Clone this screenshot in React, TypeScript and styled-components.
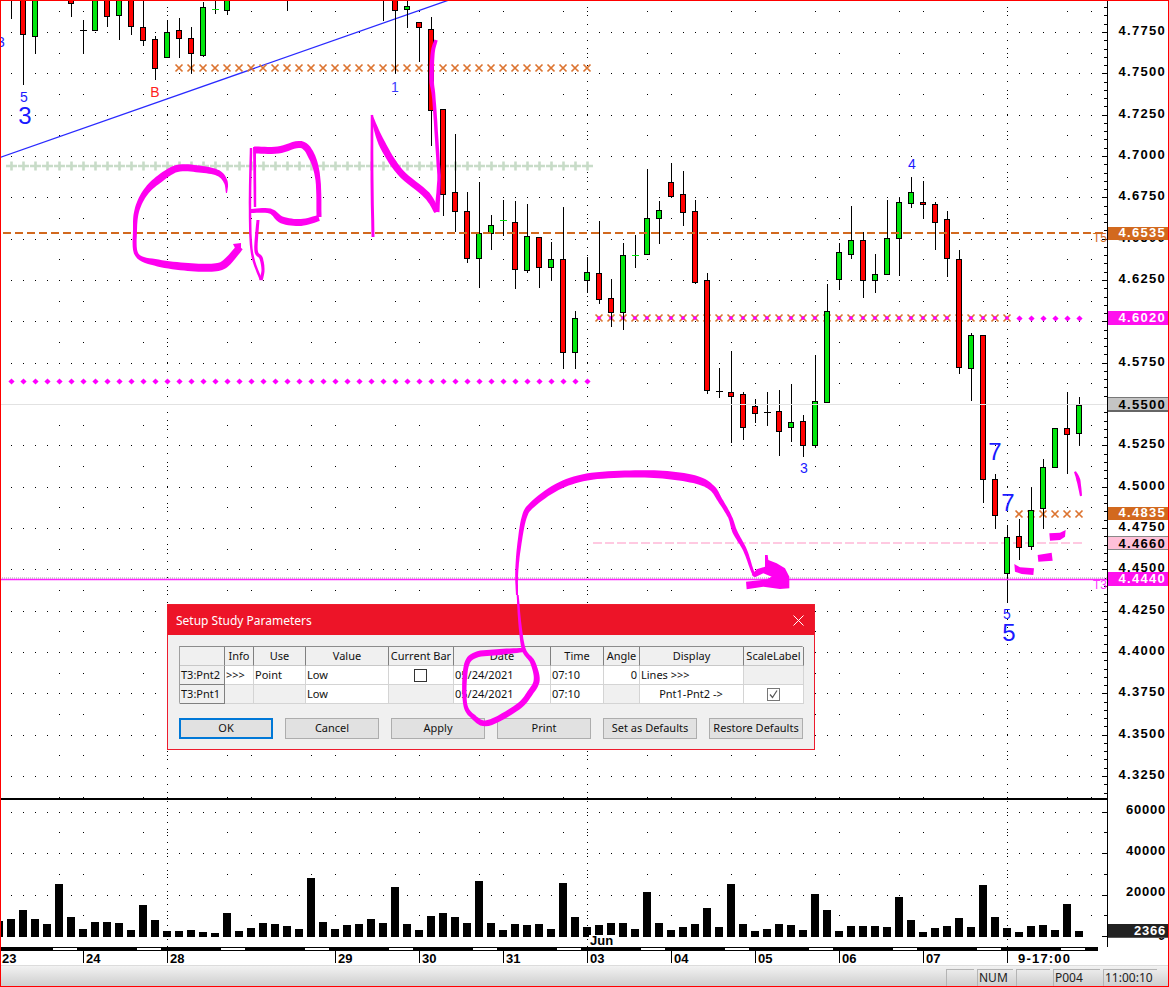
import React from "react";
import styled, { createGlobalStyle } from "styled-components";

const Global = createGlobalStyle`
  html, body { margin: 0; padding: 0; background: #fff; }
  #root { width: 1169px; height: 987px; }
`;

const Window = styled.div`
  box-sizing: border-box; width: 1169px; height: 987px; border: 1px solid #ff0000;
  display: flex; flex-direction: column; position: relative; overflow: hidden;
  background: #fff; font-family: "Liberation Sans", Arial, sans-serif;
`;
const ChartRow = styled.div` display: flex; height: 946px; flex: none; `;
const PlotColumn = styled.div`
  width: 1106px; flex: none; border-right: 1px solid #000; display: flex; flex-direction: column; position: relative;
`;
const PaneSvg = styled.svg` display: block; flex: none; `;
const PaneDivider = styled.div` height: 2px; background: #000; flex: none; `;
const ScaleColumn = styled.div` width: 60px; flex: none; position: relative; overflow: hidden; `;
const ScaleLabel = styled.div<{ $y: number }>`
  position: absolute; right: 2px; top: ${(p) => p.$y - 8}px; height: 14px; line-height: 14px;
  font-size: 13px; font-weight: 700; color: #000; letter-spacing: 1.3px; white-space: nowrap;
`;
const VolumeLabel = styled(ScaleLabel)` letter-spacing: 0.75px; `;
const tagColors: Record<string, string> = {
  orange: "background:#d2691e;color:#fff;",
  magenta: "background:#ff10ee;color:#fff;",
  gray: "background:#c4c4c4;color:#000;border-top:1px solid #777;border-bottom:2px solid #666;",
  pink: "background:#ffc0d8;color:#000;border-top:1px solid #888;border-bottom:1px solid #888;",
  dark: "background:#222;color:#fff;letter-spacing:0.75px;border-bottom:1px solid #555;",
};
const PriceTag = styled.div<{ $top: number; $h: number; $kind: string }>`
  position: absolute; left: 0; right: 0; top: ${(p) => p.$top}px; height: ${(p) => p.$h}px;
  box-sizing: border-box; padding-right: 2px; text-align: right; font-size: 13px; font-weight: 700;
  line-height: ${(p) => p.$h - 1}px; letter-spacing: 1.3px; ${(p) => tagColors[p.$kind]}
`;
const MonthBadge = styled.div`
  position: absolute; left: 588px; bottom: 0; width: 26px; height: 12px; background: #fff;
  font-size: 13px; font-weight: 700; line-height: 12px; padding-left: 1px;
`;
const TimeBar = styled.div`
  margin-right: 70px; height: 4px; flex: none; box-sizing: border-box; background-color: #000;
  border-top: 1px solid #000; border-bottom: 1px solid #000;
  background-image: repeating-linear-gradient(90deg, #000 0, #000 52px, #fff 52px, #fff 76px, #000 76px, #000 84px);
`;
const DateRow = styled.div`
  display: grid; height: 14px; flex: none;
  grid-template-columns: 82px 84px 168px 84px 84px 84px 84px 84px 84px 84px 84px 1fr;
`;
const DateCell = styled.div<{ $first?: boolean }>`
  border-left: ${(p) => (p.$first ? "none" : "1px solid #000")}; padding-left: ${(p) => (p.$first ? "1px" : "2px")};
  font-size: 13px; font-weight: 700; line-height: 15px; height: 12px; color: #000; white-space: nowrap;
`;
const ClockCell = styled(DateCell)` padding-left: 10px; letter-spacing: 1.2px; height: 12px; `;
const StatusBar = styled.div`
  height: 21px; flex: none; box-sizing: border-box; border-top: 1px solid #dcdcdc; padding: 3px 11px 0 0;
  background: linear-gradient(#f2f2f2, #cecece); display: flex; justify-content: flex-end; gap: 3px;
`;
const StatusPanel = styled.div<{ $w: number }>`
  width: ${(p) => p.$w}px; height: 17px; box-sizing: border-box; border-left: 1px solid #b4b4b4; border-top: 1px solid #b4b4b4;
  font: 12px/16px "Noto Sans", sans-serif; color: #222; padding-left: 1px; overflow: hidden;
`;

const Dialog = styled.div`
  position: absolute; left: 166px; top: 603px; width: 648px; height: 146px; box-sizing: border-box;
  border: 1px solid #ed1c2e; background: #f0f0f0; display: flex; flex-direction: column;
  font-family: "Noto Sans", sans-serif;
`;
const TitleBar = styled.div`
  height: 30px; flex: none; background: #ed1428; color: #fff; font-size: 12px; line-height: 31px; padding: 0 10px 0 8px;
  display: flex; align-items: center; justify-content: space-between;
`;
const DialogBody = styled.div` padding: 11px 11px 0 11px; display: flex; flex-direction: column; gap: 14px; `;
const ParamGrid = styled.div`
  display: grid; width: 624px; grid-template-columns: 45px 29px 52px 83px 65px 97px 53px 36px 104px 60px;
  grid-auto-rows: 19px; border-top: 1px solid #8c8c8c; border-left: 1px solid #a0a0a0; border-right: 1px solid #d4d4d4;
  border-bottom: 2px solid #d4d4d4; box-sizing: border-box; height: 58px; background: #fff;
`;
const HeadCell = styled.div`
  background: #f0f0f0; border-right: 1px solid #808080; border-bottom: 1px solid #c8c8c8; box-sizing: border-box;
  font-size: 11px; line-height: 18px; text-align: center; color: #111; white-space: nowrap; overflow: hidden;
`;
const RowLabel = styled(HeadCell)`
  text-align: left; padding-left: 1px; border-bottom: 1px solid #808080;
`;
const Cell = styled.div<{ $shade?: boolean; $align?: string }>`
  background: ${(p) => (p.$shade ? "#f0f0f0" : "#fff")}; border-right: 1px solid #d4d4d4; border-bottom: 1px solid #d4d4d4;
  box-sizing: border-box; font-size: 11px; line-height: 18px; padding: 0 2px 0 1px; color: #111; white-space: nowrap; overflow: hidden;
  text-align: ${(p) => p.$align || "left"}; display: block;
`;
const CheckCell = styled(Cell)` display: flex; align-items: center; justify-content: center; `;
const CheckBox = styled.span<{ $on?: boolean }>`
  width: 13px; height: 13px; box-sizing: border-box; border: 1px solid ${(p) => (p.$on ? "#777" : "#333")};
  background: #fff; display: flex; align-items: center; justify-content: center;
`;
const ButtonRow = styled.div` display: flex; gap: 12px; `;
const DialogButton = styled.button<{ $primary?: boolean }>`
  width: 94px; height: 21px; padding: 0 0 2px; box-sizing: border-box; background: #e1e1e1; color: #111;
  border: ${(p) => (p.$primary ? "2px solid #0078d7" : "1px solid #adadad")};
  font: 11px "Noto Sans", sans-serif; white-space: nowrap;
`;
const Overlay = styled.svg` position: absolute; left: 0; top: 0; pointer-events: none; `;

type C = [number, number, number, number, number, string];
const R = "#ff0000", G = "#00e40c";
const candles: C[] = [
  [11, -5, -9, -9, 19, "w"], [23, -5, -5, 34, 85, R], [35, -5, -5, 36, 54, G], [71, -5, -5, 3, 17, R],
  [83, 20, 30, 30, 54, "k"], [95, -5, -5, 30, 30, G], [107, -5, -5, 16, 27, R], [119, -5, -5, 15, 40, G],
  [131, -5, -5, 26, 35, R], [143, -5, 27, 40, 46, R], [155, 36, 39, 68, 80, R], [167, 20, 32, 57, 57, G],
  [179, 18, 30, 38, 58, R], [191, 27, 38, 53, 74, R], [203, 2, 7, 55, 57, G], [215, -5, 9, 9, 14, "g"],
  [227, -5, -5, 10, 15, G], [287, -5, -9, -9, 11, "w"], [383, -5, -9, -9, 21, "w"], [395, -5, -5, 10, 73, R],
  [407, -5, 6, 9, 28, G], [419, 22, 22, 27, 62, R], [431, 17, 29, 110, 146, R], [443, 109, 109, 194, 216, R],
  [455, 134, 192, 211, 232, R], [467, 192, 211, 258, 263, R], [479, 182, 233, 258, 288, G], [491, 215, 225, 233, 250, G],
  [503, 200, 220, 220, 236, "g"], [515, 201, 222, 269, 289, R], [527, 204, 236, 270, 273, G], [539, 237, 237, 267, 288, R],
  [551, 242, 259, 267, 281, G], [563, 207, 259, 352, 369, R], [575, 311, 318, 352, 369, G], [587, 257, 272, 280, 293, G],
  [599, 221, 273, 299, 304, R], [611, 279, 298, 312, 327, R], [623, 243, 255, 312, 330, G], [635, 235, 255, 255, 268, "g"],
  [647, 169, 218, 254, 255, G], [659, 201, 210, 218, 244, G], [671, 163, 182, 196, 198, R], [683, 171, 194, 212, 226, R],
  [695, 200, 211, 282, 284, R], [707, 273, 280, 390, 394, R], [719, 368, 391, 391, 398, "k"], [731, 351, 392, 396, 443, R],
  [743, 392, 394, 427, 440, R], [755, 399, 406, 413, 423, R], [767, 392, 412, 412, 426, "k"], [779, 390, 411, 431, 456, R],
  [791, 384, 422, 427, 442, G], [803, 415, 421, 445, 457, R], [815, 355, 401, 445, 448, G], [827, 284, 311, 402, 403, G],
  [839, 243, 252, 279, 290, G], [851, 206, 240, 254, 259, G], [863, 232, 240, 280, 298, R], [875, 254, 274, 280, 293, G],
  [887, 200, 238, 274, 274, G], [899, 197, 202, 238, 276, G], [911, 177, 192, 203, 208, G], [923, 181, 202, 204, 218, R],
  [935, 202, 204, 222, 250, R], [947, 211, 219, 258, 277, R], [959, 250, 259, 367, 374, R], [971, 333, 335, 368, 401, G],
  [983, 335, 335, 479, 503, R], [995, 474, 479, 515, 528, R], [1007, 525, 537, 573, 603, G], [1019, 519, 536, 547, 560, R],
  [1031, 487, 510, 546, 550, G], [1043, 459, 467, 508, 529, G], [1055, 428, 428, 467, 468, G], [1067, 392, 428, 434, 474, R],
  [1079, 397, 405, 433, 445, G],
];
const volumes: [number, number][] = [
  [-1, 393], [11, 387], [23, 360], [35, 387], [47, 402], [59, 282], [71, 381], [83, 417], [95, 396], [107, 396], [119, 399], [131, 420],
  [143, 345], [155, 390], [167, 423], [179, 423], [191, 420], [203, 426], [215, 429], [227, 369], [239, 423], [251, 414], [263, 399],
  [275, 402], [287, 408], [299, 417], [311, 264], [323, 396], [335, 417], [347, 405], [359, 402], [371, 387], [383, 399], [395, 291],
  [407, 402], [419, 420], [431, 378], [443, 369], [455, 381], [467, 399], [479, 273], [491, 399], [503, 420], [515, 402], [527, 405],
  [539, 402], [551, 417], [563, 279], [575, 381], [587, 411], [599, 405], [611, 399], [623, 399], [635, 417], [647, 306], [659, 399],
  [671, 420], [683, 411], [695, 402], [707, 354], [719, 411], [731, 282], [743, 402], [755, 423], [767, 417], [779, 402], [791, 405],
  [803, 420], [815, 312], [827, 360], [839, 423], [851, 408], [863, 408], [875, 408], [887, 411], [899, 321], [911, 390], [923, 426],
  [935, 414], [947, 408], [959, 384], [971, 411], [983, 285], [995, 381], [1007, 414], [1019, 426], [1031, 408], [1043, 405], [1055, 420],
  [1067, 342], [1079, 423],
];

const range = (a: number, b: number, s = 1) => { const o: number[] = []; for (let v = a; s > 0 ? v <= b : v >= b; v += s) o.push(v); return o; };
const dot = (x: number, y: number) => `M${x} ${y}h1v1h-1z`;
const slots = range(11, 1091, 12);
const pairSlots = range(59, 1091, 84).flatMap((x) => [x, x + 24]);

const priceGrid = () => {
  let d = "";
  range(0, 18).forEach((k) => { const y = Math.round(32 + 41.33 * k); slots.forEach((x) => (d += dot(x, y))); });
  range(-1, 18).forEach((k) => { const y = Math.round(52.7 + 41.33 * k); pairSlots.forEach((x) => (d += dot(x, y))); });
  [167, 587, 1007].forEach((x) => range(0, 96).forEach((i) => (d += dot(x, Math.round(7 + 8.267 * i)))));
  return d;
};
const volumeGrid = () => {
  let d = "";
  [812, 853, 895].forEach((y) => slots.forEach((x) => (d += dot(x, y))));
  [832, 874, 915].forEach((y) => pairSlots.forEach((x) => (d += dot(x, y))));
  [167, 587, 1007].forEach((x) => range(801, 946, 6.9).forEach((y) => (d += dot(x, Math.round(y)))));
  return d;
};
const priceTicks = () => {
  let d = "";
  range(-3, 93).forEach((i) => { const y = Math.round(32 + 8.267 * i); const major = ((i % 5) + 5) % 5 === 0; d += `M${major ? 1102 : 1104} ${y + 0.5}H1107`; });
  return d;
};
const volumeTicks = () => {
  let d = "";
  [812, 832, 853, 874, 895, 915, 936].forEach((y, i) => (d += `M${i % 2 ? 1104 : 1102} ${y + 0.5}H1107`));
  return d;
};

type P = [number, number, number];
const ribbon = (pts: P[]) => {
  const s: P[] = [];
  for (let i = 0; i < pts.length - 1; i++) {
    const p0 = pts[Math.max(i - 1, 0)], p1 = pts[i], p2 = pts[i + 1], p3 = pts[Math.min(i + 2, pts.length - 1)];
    for (let j = 0; j < 8; j++) {
      const t = j / 8, t2 = t * t, t3 = t2 * t;
      const f = (a: number, b: number, c: number, e: number) => 0.5 * (2 * b + (c - a) * t + (2 * a - 5 * b + 4 * c - e) * t2 + (3 * b - a - 3 * c + e) * t3);
      s.push([f(p0[0], p1[0], p2[0], p3[0]), f(p0[1], p1[1], p2[1], p3[1]), p1[2] + (p2[2] - p1[2]) * t]);
    }
  }
  s.push(pts[pts.length - 1]);
  const L: string[] = [], Rr: string[] = [];
  s.forEach((p, i) => {
    const a = s[Math.max(i - 1, 0)], b = s[Math.min(i + 1, s.length - 1)];
    const dx = b[0] - a[0], dy = b[1] - a[1], n = Math.hypot(dx, dy) || 1;
    const nx = (-dy / n) * p[2] * 0.5, ny = (dx / n) * p[2] * 0.5;
    L.push(`${(p[0] + nx).toFixed(1)} ${(p[1] + ny).toFixed(1)}`);
    Rr.unshift(`${(p[0] - nx).toFixed(1)} ${(p[1] - ny).toFixed(1)}`);
  });
  return `M${L.join("L")}L${Rr.join("L")}Z`;
};
const poly = (pts: number[][]) => `M${pts.map((p) => p.join(" ")).join("L")}Z`;
const z10 = (a: number[][]) => a.map(([x, y]) => [500 + x / 3, 460 + y / 3]);
const z6 = (a: number[][]) => a.map(([x, y]) => [900 + x / 3, 390 + y / 3]);

const strokes: string[] = [
  ribbon([[226.5, 193, 1], [225.7, 182, 4], [218, 173, 6], [199, 169, 7], [177, 168.5, 7], [158, 180, 7.5], [145, 193, 6], [137, 210, 5], [135, 230, 4], [137, 255, 4], [158, 263, 7], [188, 267, 8], [214, 267.5, 8], [226, 263, 8], [240, 247, 7]]),
  poly([[233, 244], [241, 243], [241, 250], [236, 250]]),
  ribbon([[251, 148, 2.5], [250, 210, 2.5], [252, 253, 2.5], [261, 280, 2.5]]),
  ribbon([[254.5, 147, 3], [255, 207, 2.5]]),
  ribbon([[254, 150, 7], [278, 150, 7], [301, 144.5, 7], [312, 157, 7], [318, 180, 5], [319, 217, 5]]),
  ribbon([[319, 218, 6], [301, 222.5, 7], [282, 220, 7], [270, 211, 5], [250, 211, 4]]),
  ribbon([[258, 220, 3], [256, 250, 3.5], [261, 258, 3.5], [263, 270, 3], [261, 280, 3.5]]),
  ribbon([[373, 237, 3], [372, 180, 3], [372, 115, 2.5]]),
  ribbon([[371.5, 115, 1.5], [381.7, 143, 7], [400, 172, 7], [426.7, 195, 7], [436.7, 212, 5]]),
  ribbon([[437, 212, 5], [439, 180, 3.5], [438, 160, 3.5], [434, 100, 3.5], [431.7, 80, 4.5], [432.7, 53, 4], [436, 40, 3.5]]),
  ribbon([[517, 595, 2], [516.7, 573, 3], [519, 547, 4], [524, 518, 5], [532, 505, 6], [557, 487, 7], [587, 477, 7], [630, 474, 7], [667, 475, 8], [697, 480, 8], [712, 488, 6], [720, 500, 5], [730, 517, 4], [735, 532, 5], [745, 550, 4], [752, 570, 3], [755, 576, 3]]),
  poly(z10([[795, 285], [803, 285], [805, 300], [830, 310], [855, 325], [868, 350], [868, 385], [840, 387], [790, 380], [740, 388], [738, 365], [800, 358], [815, 350], [790, 340], [765, 352], [755, 345], [770, 328], [795, 320]])),
  ribbon([[517.7, 595, 2], [520, 625, 3], [524, 650, 4], [532.5, 662, 5], [536.7, 680, 6], [530, 693, 6], [517.7, 707, 6], [488, 723, 6], [473.5, 717, 5], [465, 703, 4], [466, 667, 5], [475.7, 655, 6], [500, 652, 6], [524, 650, 4]]),
  poly(z6([[343, 522], [360, 532], [402, 535], [400, 555], [365, 552], [345, 545]])),
  poly(z6([[413, 495], [455, 488], [458, 512], [415, 515]])),
  poly(z6([[448, 430], [480, 428], [497, 420], [495, 440], [480, 450], [450, 452]])),
  ribbon([[900 + 525 / 3, 390 + 245 / 3, 2], [900 + 535 / 3, 390 + 270 / 3, 4], [900 + 543 / 3, 390 + 318 / 3, 2]]),
];

const XMark = ({ x, y }: { x: number; y: number }) => (
  <path d={`M${x - 3.5} ${y - 3.5}L${x + 3.5} ${y + 3.5}M${x + 3.5} ${y - 3.5}L${x - 3.5} ${y + 3.5}`} stroke="#dc7430" strokeWidth={1.7} fill="none" />
);
const Dot = ({ x, y, r = 3.1 }: { x: number; y: number; r?: number }) => (
  <path d={`M${x} ${y - r}L${x + r} ${y}L${x} ${y + r}L${x - r} ${y}Z`} fill="#ff00ff" />
);
const Cross = ({ x, y }: { x: number; y: number }) => (
  <path d={`M${x - 5} ${y}h11M${x + 0.5} ${y - 4.5}v9`} stroke="#c8dcc8" strokeWidth={2.6} fill="none" />
);
const Label = ({ x, y, size, fill = "#1a1aff", children }: { x: number; y: number; size: number; fill?: string; children: React.ReactNode }) => (
  <text x={x} y={y} fontSize={size} fill={fill} textAnchor="middle" fontFamily="Liberation Sans, Arial, sans-serif">{children}</text>
);

const PricePane = () => (
  <PaneSvg width={1106} height={797} viewBox="1 1 1106 797">
    <path d={priceGrid()} fill="#000" />
    <path d={priceTicks()} stroke="#000" strokeWidth={1} fill="none" />
    <path d="M0 157.5L449 0" stroke="#2a2aff" strokeWidth={1.3} fill="none" />
    {range(11, 587, 12).map((x) => <Cross key={x} x={x} y={166} />)}
    {range(179, 587, 12).map((x) => <XMark key={x} x={x} y={68} />)}
    {range(599, 1007, 12).map((x) => <XMark key={x} x={x} y={318} />)}
    {range(1019, 1079, 12).map((x) => <XMark key={x} x={x} y={514} />)}
    {range(11, 587, 12).map((x) => <Dot key={x} x={x + 0.5} y={381.5} />)}
    {range(599, 1007, 12).map((x) => <Dot key={x} x={x} y={318} r={2.3} />)}
    {range(1019, 1079, 12).map((x) => <Dot key={x} x={x + 0.5} y={318.5} />)}
    <line x1={593} x2={1084} y1={543} y2={543} stroke="#ffb8d8" strokeWidth={1.5} strokeDasharray="9 3" />
    {candles.map(([c, hi, top, bot, lo, col]) => (
      <g key={c}>
        <rect x={c} y={hi} width={1} height={lo - hi} fill="#000" />
        {col === "k" && <rect x={c - 3} y={top} width={7} height={1} fill="#000" />}
        {col === "g" && <rect x={c - 3} y={top} width={7} height={1} fill="#00e40c" />}
        {(col === R || col === G) && <rect x={c - 2.5} y={top + 0.5} width={5} height={bot - top} fill={col} stroke="#000" strokeWidth={1} />}
      </g>
    ))}
    <line x1={0} x2={1107} y1={404.5} y2={404.5} stroke="#e2e2e2" strokeWidth={1} />
    <line x1={3} x2={1107} y1={233} y2={233} stroke="#d2691e" strokeWidth={2} strokeDasharray="8 4" />
    <line x1={0} x2={1107} y1={578} y2={578} stroke="#d0d0d0" strokeWidth={2} strokeDasharray="1 1" />
    <line x1={0} x2={1107} y1={579.5} y2={579.5} stroke="#ff20ff" strokeWidth={1.4} />
    <Label x={24} y={102} size={14}>5</Label>
    <Label x={25} y={124} size={24}>3</Label>
    <Label x={1} y={47} size={14}>3</Label>
    <Label x={155} y={97} size={14} fill="#ff2020">B</Label>
    <Label x={395} y={92} size={14} fill="#3a3aff">1</Label>
    <Label x={912} y={169} size={14}>4</Label>
    <Label x={804} y={473} size={14}>3</Label>
    <Label x={995} y={460} size={24}>7</Label>
    <Label x={1008} y={511} size={24}>7</Label>
    <Label x={1007} y={619} size={14}>5</Label>
    <Label x={1009} y={641} size={24}>5</Label>
    <Label x={1100} y={242} size={12} fill="#d2691e">T5</Label>
    <Label x={1100} y={589} size={12} fill="#ff30ff">T3</Label>
  </PaneSvg>
);

const VolumePane = () => (
  <PaneSvg width={1106} height={147} viewBox="1 800 1106 147">
    <path d={volumeGrid()} fill="#000" />
    <path d={volumeTicks()} stroke="#000" strokeWidth={1} fill="none" />
    {volumes.map(([x, top]) => <rect key={x} x={x - 4} y={790 + top / 3} width={8} height={937 - (790 + top / 3)} fill="#000" />)}
  </PaneSvg>
);

const prices = range(0, 18).map((k) => ({ y: 31 + 41.33 * k, text: (4.775 - 0.025 * k).toFixed(4) }));
const dates = ["23", "24", "28", "29", "30", "31", "03", "04", "05", "06", "07"];

const App = () => (
  <>
    <Global />
    <Window>
      <ChartRow>
        <PlotColumn>
          <PricePane />
          <PaneDivider />
          <VolumePane />
          <MonthBadge>Jun</MonthBadge>
        </PlotColumn>
        <ScaleColumn>
          {prices.map((p) => <ScaleLabel key={p.text} $y={Math.round(p.y)}>{p.text}</ScaleLabel>)}
          <PriceTag $kind="orange" $top={226} $h={13}>4.6535</PriceTag>
          <PriceTag $kind="magenta" $top={310} $h={14}>4.6020</PriceTag>
          <PriceTag $kind="gray" $top={396} $h={15}>4.5500</PriceTag>
          <PriceTag $kind="orange" $top={506} $h={13}>4.4835</PriceTag>
          <PriceTag $kind="pink" $top={535} $h={14}>4.4660</PriceTag>
          <PriceTag $kind="magenta" $top={571} $h={14}>4.4440</PriceTag>
          <VolumeLabel $y={810}>60000</VolumeLabel>
          <VolumeLabel $y={851}>40000</VolumeLabel>
          <VolumeLabel $y={892}>20000</VolumeLabel>
          <VolumeLabel $y={936}>0</VolumeLabel>
          <PriceTag $kind="dark" $top={923} $h={14}>2366</PriceTag>
        </ScaleColumn>
      </ChartRow>
      <TimeBar />
      <DateRow>
        {dates.map((d, i) => <DateCell key={d} $first={i === 0}>{d}</DateCell>)}
        <ClockCell>9-17:00</ClockCell>
      </DateRow>
      <StatusBar>
        <StatusPanel $w={28} />
        <StatusPanel $w={36}>NUM</StatusPanel>
        <StatusPanel $w={34} />
        <StatusPanel $w={47}>P004</StatusPanel>
        <StatusPanel $w={54}>11:00:10</StatusPanel>
      </StatusBar>
      <Dialog>
        <TitleBar>
          Setup Study Parameters
          <svg width="11" height="11" viewBox="0 0 11 11"><path d="M0.5 0.5L10.5 10.5M10.5 0.5L0.5 10.5" stroke="#fff" strokeWidth="1" /></svg>
        </TitleBar>
        <DialogBody>
          <ParamGrid>
            <HeadCell />
            <HeadCell>Info</HeadCell>
            <HeadCell>Use</HeadCell>
            <HeadCell>Value</HeadCell>
            <HeadCell>Current Bar</HeadCell>
            <HeadCell>Date</HeadCell>
            <HeadCell>Time</HeadCell>
            <HeadCell>Angle</HeadCell>
            <HeadCell>Display</HeadCell>
            <HeadCell>ScaleLabel</HeadCell>

            <RowLabel>T3:Pnt2</RowLabel>
            <Cell>{">>>"}</Cell>
            <Cell>Point</Cell>
            <Cell>Low</Cell>
            <CheckCell><CheckBox /></CheckCell>
            <Cell>05/24/2021</Cell>
            <Cell>07:10</Cell>
            <Cell $align="right">0</Cell>
            <Cell>Lines {">>>"}</Cell>
            <Cell $shade />

            <RowLabel>T3:Pnt1</RowLabel>
            <Cell $shade />
            <Cell $shade />
            <Cell>Low</Cell>
            <Cell $shade />
            <Cell>05/24/2021</Cell>
            <Cell>07:10</Cell>
            <Cell $shade />
            <Cell $align="center">Pnt1-Pnt2 {"->"}</Cell>
            <CheckCell>
              <CheckBox $on>
                <svg width="11" height="11" viewBox="0 0 11 11"><path d="M2 5.5L4.5 8.5L9 1.5" stroke="#555" strokeWidth="1.2" fill="none" /></svg>
              </CheckBox>
            </CheckCell>
          </ParamGrid>
          <ButtonRow>
            <DialogButton $primary>OK</DialogButton>
            <DialogButton>Cancel</DialogButton>
            <DialogButton>Apply</DialogButton>
            <DialogButton>Print</DialogButton>
            <DialogButton>Set as Defaults</DialogButton>
            <DialogButton>Restore Defaults</DialogButton>
          </ButtonRow>
        </DialogBody>
      </Dialog>
      <Overlay width={1167} height={985} viewBox="1 1 1167 985">
        {strokes.map((d, i) => <path key={i} d={d} fill="#ff00f0" />)}
      </Overlay>
    </Window>
  </>
);

export default App;
